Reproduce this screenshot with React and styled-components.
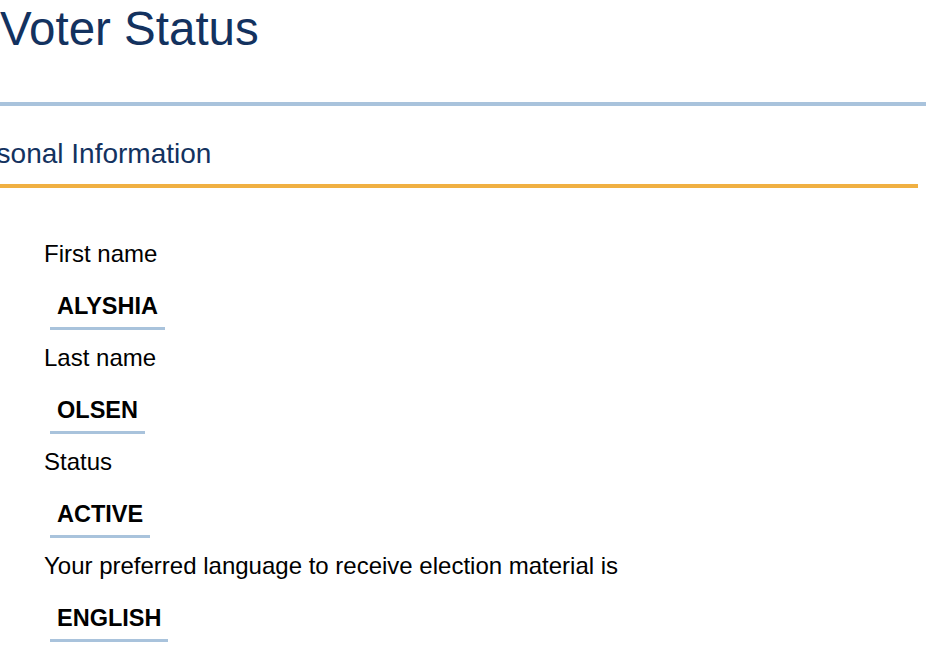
import React from "react";
import styled, { createGlobalStyle } from "styled-components";

const GlobalStyle = createGlobalStyle`
  html, body {
    margin: 0;
    padding: 0;
    background: #ffffff;
    overflow: hidden;
  }
  body {
    font-family: "Liberation Sans", Arial, Helvetica, sans-serif;
    color: #000;
  }
`;

const Page = styled.div`
  width: 926px;
  height: 655px;
  overflow: hidden;
`;

const Header = styled.header`
  padding: 3px 0 47px;
  border-bottom: 4px solid #a9c3dc;
`;

const Title = styled.h1`
  margin: 0;
  font-size: 47.5px;
  line-height: 52px;
  font-weight: 400;
  color: #13325f;
  white-space: nowrap;
`;

const Section = styled.section`
  padding-top: 32px;
  margin-right: 8px;
`;

const SectionTitle = styled.h2`
  margin: 0;
  padding-bottom: 14px;
  font-size: 28px;
  line-height: 32px;
  font-weight: 400;
  color: #13325f;
  text-indent: -47px;
  white-space: nowrap;
  border-bottom: 4px solid #f0b042;
`;

const Fields = styled.dl`
  margin: 0;
  padding: 52px 0 0 44px;
`;

const Field = styled.div`
  margin-bottom: 14px;
`;

const Label = styled.dt`
  margin: 0;
  font-size: 24px;
  line-height: 28px;
  color: #000;
`;

const Value = styled.dd`
  display: inline-block;
  margin: 24px 0 0 6px;
  padding: 0 7px 7px;
  font-size: 23.5px;
  line-height: 28px;
  font-weight: 700;
  color: #000;
  border-bottom: 3px solid #a9c3dc;
`;

const info = [
  { label: "First name", value: "ALYSHIA" },
  { label: "Last name", value: "OLSEN" },
  { label: "Status", value: "ACTIVE" },
  { label: "Your preferred language to receive election material is", value: "ENGLISH" },
];

export default function App() {
  return (
    <Page>
      <GlobalStyle />
      <Header>
        <Title>Voter Status</Title>
      </Header>
      <Section>
        <SectionTitle>Personal Information</SectionTitle>
        <Fields>
          {info.map((f) => (
            <Field key={f.label}>
              <Label>{f.label}</Label>
              <Value>{f.value}</Value>
            </Field>
          ))}
        </Fields>
      </Section>
    </Page>
  );
}
